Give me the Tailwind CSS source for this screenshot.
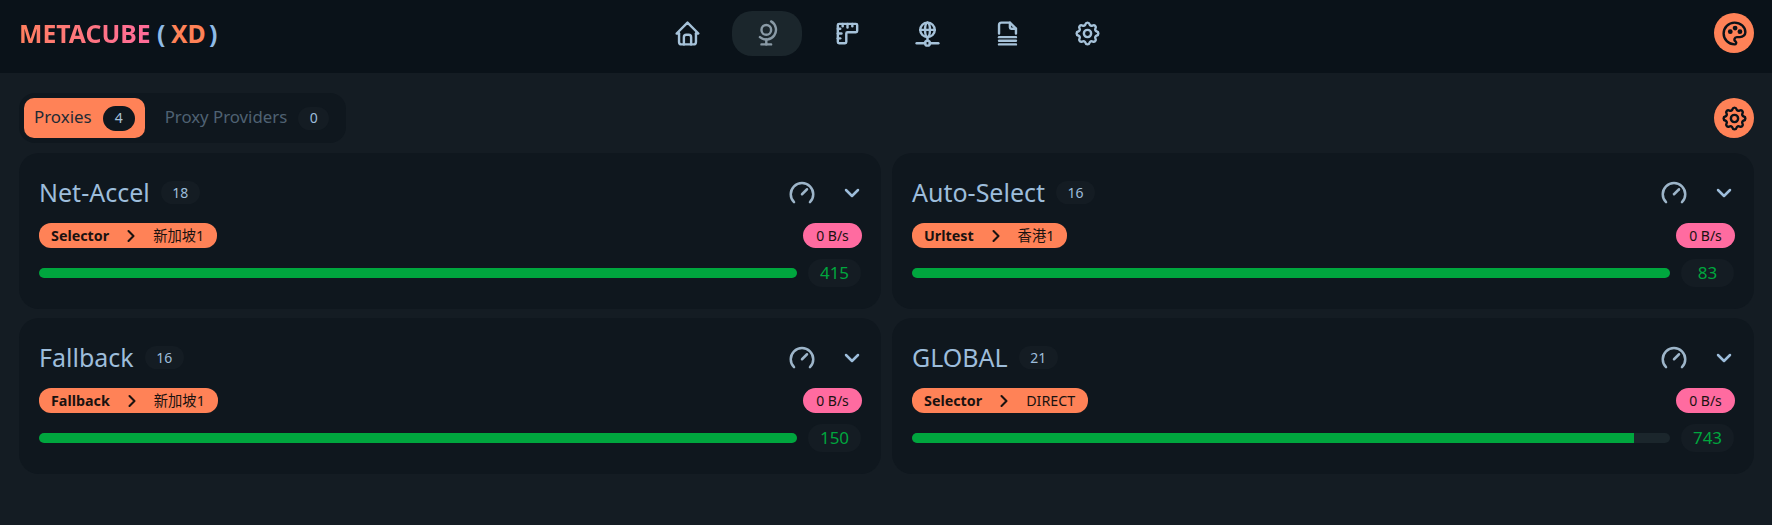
<!DOCTYPE html>
<html lang="en">
<head>
<meta charset="utf-8">
<title>Metacube XD</title>
<script src="https://cdn.jsdelivr.net/npm/@tailwindcss/browser@4"></script>
</head>
<body class="m-0 h-[525px] w-[1772px] overflow-hidden bg-[#141c23] font-['Noto_Sans','Noto_Sans_CJK_SC',sans-serif] text-[#9dbddb]">
<header class="relative flex h-[73px] items-center justify-between bg-[#0a1219] pb-[7px] pl-[19px] pr-[18px]">
  <div class="text-[24.8px] font-bold leading-none"><span class="bg-gradient-to-r from-[#ff7f5e] to-[#ff6b9a] bg-clip-text text-transparent">METACUBE</span> <span class="text-[#8fbbe6]">(</span> <span class="ml-[-1px] text-[#ff8257]">XD</span> <span class="ml-[-3px] text-[#8fbbe6]">)</span></div>
  <nav class="absolute left-[652px] top-[11px] flex gap-[10px] text-[#a6c2d9]">
    <a class="flex h-[45px] w-[70px] items-center justify-center rounded-[20px]"><svg class="h-[29px] w-[29px]" viewBox="0 0 24 24" fill="none" stroke="currentColor" stroke-width="2" stroke-linecap="round" stroke-linejoin="round"><path d="M5 12l-2 0l9 -9l9 9l-2 0"/><path d="M5 12v7a2 2 0 0 0 2 2h10a2 2 0 0 0 2 -2v-7"/><path d="M9 21v-6a2 2 0 0 1 2 -2h2a2 2 0 0 1 2 2v6"/></svg></a>
    <a class="flex h-[45px] w-[70px] items-center justify-center rounded-[20px] bg-[#1b262c] text-[#8a9aa6]"><svg class="h-[29px] w-[29px]" viewBox="0 0 24 24" fill="none" stroke="currentColor" stroke-width="2" stroke-linecap="round" stroke-linejoin="round"><path d="M7 9a4 4 0 1 0 8 0a4 4 0 0 0 -8 0"/><path d="M5.75 15a8.015 8.015 0 1 0 9.25 -13"/><path d="M11 17v4"/><path d="M7 21h8"/></svg></a>
    <a class="flex h-[45px] w-[70px] items-center justify-center rounded-[20px]"><svg class="h-[29px] w-[29px]" viewBox="0 0 24 24" fill="none" stroke="currentColor" stroke-width="2" stroke-linecap="round" stroke-linejoin="round"><path d="M5 4h14a1 1 0 0 1 1 1v5a1 1 0 0 1 -1 1h-7a1 1 0 0 0 -1 1v7a1 1 0 0 1 -1 1h-5a1 1 0 0 1 -1 -1v-14a1 1 0 0 1 1 -1"/><path d="M4 8l2 0"/><path d="M4 12l3 0"/><path d="M4 16l2 0"/><path d="M8 4l0 2"/><path d="M12 4l0 3"/><path d="M16 4l0 2"/></svg></a>
    <a class="flex h-[45px] w-[70px] items-center justify-center rounded-[20px]"><svg class="h-[29px] w-[29px]" viewBox="0 0 24 24" fill="none" stroke="currentColor" stroke-width="2" stroke-linecap="round" stroke-linejoin="round"><path d="M6 9a6 6 0 1 0 12 0a6 6 0 0 0 -12 0"/><path d="M12 3c1.333 .333 2 2.333 2 6s-.667 5.667 -2 6"/><path d="M12 3c-1.333 .333 -2 2.333 -2 6s.667 5.667 2 6"/><path d="M6 9h12"/><path d="M3 20h7"/><path d="M14 20h7"/><path d="M10 20a2 2 0 1 0 4 0a2 2 0 0 0 -4 0"/><path d="M12 15v3"/></svg></a>
    <a class="flex h-[45px] w-[70px] items-center justify-center rounded-[20px]"><svg class="h-[29px] w-[29px]" viewBox="0 0 24 24" fill="none" stroke="currentColor" stroke-width="2" stroke-linecap="round" stroke-linejoin="round"><path d="M14 3v4a1 1 0 0 0 1 1h4"/><path d="M5 12v-7a2 2 0 0 1 2 -2h7l5 5v4"/><path d="M5 21h14"/><path d="M5 18h14"/><path d="M5 15h14"/></svg></a>
    <a class="flex h-[45px] w-[70px] items-center justify-center rounded-[20px]"><svg class="h-[29px] w-[29px]" viewBox="0 0 24 24" fill="none" stroke="currentColor" stroke-width="2" stroke-linecap="round" stroke-linejoin="round"><path d="M10.325 4.317c.426 -1.756 2.924 -1.756 3.35 0a1.724 1.724 0 0 0 2.573 1.066c1.543 -.94 3.31 .826 2.37 2.37a1.724 1.724 0 0 0 1.065 2.572c1.756 .426 1.756 2.924 0 3.35a1.724 1.724 0 0 0 -1.066 2.573c.94 1.543 -.826 3.31 -2.37 2.37a1.724 1.724 0 0 0 -2.572 1.065c-.426 1.756 -2.924 1.756 -3.35 0a1.724 1.724 0 0 0 -2.573 -1.066c-1.543 .94 -3.31 -.826 -2.37 -2.37a1.724 1.724 0 0 0 -1.065 -2.572c-1.756 -.426 -1.756 -2.924 0 -3.35a1.724 1.724 0 0 0 1.066 -2.573c-.94 -1.543 .826 -3.31 2.37 -2.37c1 .608 2.296 .07 2.572 -1.065"/><path d="M9 12a3 3 0 1 0 6 0a3 3 0 0 0 -6 0"/></svg></a>
  </nav>
  <button class="flex h-10 w-10 items-center justify-center rounded-full bg-[#ff8257] text-[#0a1219]"><svg class="h-[29px] w-[29px]" viewBox="0 0 24 24" fill="none" stroke="currentColor" stroke-width="2" stroke-linecap="round" stroke-linejoin="round"><path d="M12 21a9 9 0 0 1 0 -18c4.97 0 9 3.582 9 8c0 1.06 -.474 2.078 -1.318 2.828c-.844 .75 -1.989 1.172 -3.182 1.172h-2.5a2 2 0 0 0 -1 3.75a1.3 1.3 0 0 1 -1 2.25"/><path d="M8.5 10.5m-1 0a1 1 0 1 0 2 0a1 1 0 1 0 -2 0"/><path d="M12.5 7.5m-1 0a1 1 0 1 0 2 0a1 1 0 1 0 -2 0"/><path d="M16.5 10.5m-1 0a1 1 0 1 0 2 0a1 1 0 1 0 -2 0"/></svg></button>
</header>
<main class="pl-[19px] pr-[18px]">
  <div class="flex h-[80px] items-center justify-between pt-[10px]">
    <div class="flex h-[50px] items-center rounded-[16px] bg-[#0f171e] p-[5px]">
      <div class="flex h-10 items-center gap-[11px] rounded-[10px] bg-[#ff8257] px-[10px] text-[#1d2a35]"><span class="mt-[-2px] text-[16.9px]">Proxies</span><span class="flex h-[25px] w-8 items-center justify-center rounded-full bg-[#0f171e] text-sm text-[#a6c2d9]">4</span></div>
      <div class="flex h-10 items-center gap-[11px] pl-[20px] pr-[12px] text-[#4f6273]"><span class="mt-[-2px] text-[16.8px]">Proxy Providers</span><span class="flex h-[23px] w-[31px] items-center justify-center rounded-full bg-[#141c23] text-sm text-[#9dbddb]">0</span></div>
    </div>
    <button class="flex h-10 w-10 items-center justify-center rounded-full bg-[#ff8257] text-[#0a1219]"><svg class="h-[29px] w-[29px]" viewBox="0 0 24 24" fill="none" stroke="currentColor" stroke-width="2" stroke-linecap="round" stroke-linejoin="round"><path d="M10.325 4.317c.426 -1.756 2.924 -1.756 3.35 0a1.724 1.724 0 0 0 2.573 1.066c1.543 -.94 3.31 .826 2.37 2.37a1.724 1.724 0 0 0 1.065 2.572c1.756 .426 1.756 2.924 0 3.35a1.724 1.724 0 0 0 -1.066 2.573c.94 1.543 -.826 3.31 -2.37 2.37a1.724 1.724 0 0 0 -2.572 1.065c-.426 1.756 -2.924 1.756 -3.35 0a1.724 1.724 0 0 0 -2.573 -1.066c-1.543 .94 -3.31 -.826 -2.37 -2.37a1.724 1.724 0 0 0 -1.065 -2.572c-1.756 -.426 -1.756 -2.924 0 -3.35a1.724 1.724 0 0 0 1.066 -2.573c-.94 -1.543 .826 -3.31 2.37 -2.37c1 .608 2.296 .07 2.572 -1.065"/><path d="M9 12a3 3 0 1 0 6 0a3 3 0 0 0 -6 0"/></svg></button>
  </div>
  <div class="grid grid-cols-2 gap-x-[11px] gap-y-[9px]">
    <section class="flex h-[156px] flex-col rounded-[20px] bg-[#0f171e] px-5 pt-[21px]">
      <div class="flex h-[37px] items-center"><h2 class="text-[25px] leading-none">Net-Accel</h2><span class="ml-[11px] flex h-[23px] w-[39px] items-center justify-center rounded-full bg-[#141c23] text-sm">18</span><svg class="ml-auto h-[30px] w-[30px] text-[#9db5c9]" viewBox="0 0 24 24" fill="none" stroke="currentColor" stroke-width="2" stroke-linecap="round" stroke-linejoin="round"><path d="M5.636 19.364a9 9 0 1 1 12.728 0"/><path d="M16 9l-4 4"/></svg><svg class="ml-[23px] mr-[-3px] h-6 w-6" viewBox="0 0 24 24" fill="none" stroke="currentColor" stroke-width="2.5" stroke-linecap="round" stroke-linejoin="round"><path d="M6 9l6 6l6 -6"/></svg></div>
      <div class="mt-[12px] flex items-center justify-between"><div class="flex h-[25px] items-center rounded-[12px] bg-[#ff8257] pl-[12px] pr-[13px] text-[14.3px] text-[#1a1210]"><b>Selector</b><svg class="mx-[12px] h-5 w-5" viewBox="0 0 24 24" fill="none" stroke="currentColor" stroke-width="2.5" stroke-linecap="round" stroke-linejoin="round"><path d="M9 6l6 6l-6 6"/></svg><span>新加坡1</span></div><span class="mr-[-1px] flex h-[25px] w-[59px] items-center justify-center rounded-full bg-[#ff6ba0] text-sm text-[#1a1210]">0 B/s</span></div>
      <div class="mt-[11px] flex h-[28px] items-center gap-[11px]"><div class="h-[10px] flex-1 overflow-hidden rounded-full bg-[#1b262c]"><div class="h-full bg-[#00a63e]" style="width:100%"></div></div><span class="flex h-[28px] w-[53px] items-center justify-center rounded-full bg-[#141c23] text-[17px] text-[#00a63e]">415</span></div>
    </section>
    <section class="flex h-[156px] flex-col rounded-[20px] bg-[#0f171e] px-5 pt-[21px]">
      <div class="flex h-[37px] items-center"><h2 class="text-[25px] leading-none">Auto-Select</h2><span class="ml-[11px] flex h-[23px] w-[39px] items-center justify-center rounded-full bg-[#141c23] text-sm">16</span><svg class="ml-auto h-[30px] w-[30px] text-[#9db5c9]" viewBox="0 0 24 24" fill="none" stroke="currentColor" stroke-width="2" stroke-linecap="round" stroke-linejoin="round"><path d="M5.636 19.364a9 9 0 1 1 12.728 0"/><path d="M16 9l-4 4"/></svg><svg class="ml-[23px] mr-[-2px] h-6 w-6" viewBox="0 0 24 24" fill="none" stroke="currentColor" stroke-width="2.5" stroke-linecap="round" stroke-linejoin="round"><path d="M6 9l6 6l6 -6"/></svg></div>
      <div class="mt-[12px] flex items-center justify-between"><div class="flex h-[25px] items-center rounded-[12px] bg-[#ff8257] pl-[12px] pr-[13px] text-[14.3px] text-[#1a1210]"><b>Urltest</b><svg class="mx-[12px] h-5 w-5" viewBox="0 0 24 24" fill="none" stroke="currentColor" stroke-width="2.5" stroke-linecap="round" stroke-linejoin="round"><path d="M9 6l6 6l-6 6"/></svg><span>香港1</span></div><span class="mr-[-1px] flex h-[25px] w-[59px] items-center justify-center rounded-full bg-[#ff6ba0] text-sm text-[#1a1210]">0 B/s</span></div>
      <div class="mt-[11px] flex h-[28px] items-center gap-[11px]"><div class="h-[10px] flex-1 overflow-hidden rounded-full bg-[#1b262c]"><div class="h-full bg-[#00a63e]" style="width:100%"></div></div><span class="flex h-[28px] w-[53px] items-center justify-center rounded-full bg-[#141c23] text-[17px] text-[#00a63e]">83</span></div>
    </section>
    <section class="flex h-[156px] flex-col rounded-[20px] bg-[#0f171e] px-5 pt-[21px]">
      <div class="flex h-[37px] items-center"><h2 class="text-[25px] leading-none">Fallback</h2><span class="ml-[11px] flex h-[23px] w-[39px] items-center justify-center rounded-full bg-[#141c23] text-sm">16</span><svg class="ml-auto h-[30px] w-[30px] text-[#9db5c9]" viewBox="0 0 24 24" fill="none" stroke="currentColor" stroke-width="2" stroke-linecap="round" stroke-linejoin="round"><path d="M5.636 19.364a9 9 0 1 1 12.728 0"/><path d="M16 9l-4 4"/></svg><svg class="ml-[23px] mr-[-3px] h-6 w-6" viewBox="0 0 24 24" fill="none" stroke="currentColor" stroke-width="2.5" stroke-linecap="round" stroke-linejoin="round"><path d="M6 9l6 6l6 -6"/></svg></div>
      <div class="mt-[12px] flex items-center justify-between"><div class="flex h-[25px] items-center rounded-[12px] bg-[#ff8257] pl-[12px] pr-[13px] text-[14.3px] text-[#1a1210]"><b>Fallback</b><svg class="mx-[12px] h-5 w-5" viewBox="0 0 24 24" fill="none" stroke="currentColor" stroke-width="2.5" stroke-linecap="round" stroke-linejoin="round"><path d="M9 6l6 6l-6 6"/></svg><span>新加坡1</span></div><span class="mr-[-1px] flex h-[25px] w-[59px] items-center justify-center rounded-full bg-[#ff6ba0] text-sm text-[#1a1210]">0 B/s</span></div>
      <div class="mt-[11px] flex h-[28px] items-center gap-[11px]"><div class="h-[10px] flex-1 overflow-hidden rounded-full bg-[#1b262c]"><div class="h-full bg-[#00a63e]" style="width:100%"></div></div><span class="flex h-[28px] w-[53px] items-center justify-center rounded-full bg-[#141c23] text-[17px] text-[#00a63e]">150</span></div>
    </section>
    <section class="flex h-[156px] flex-col rounded-[20px] bg-[#0f171e] px-5 pt-[21px]">
      <div class="flex h-[37px] items-center"><h2 class="text-[25px] leading-none">GLOBAL</h2><span class="ml-[11px] flex h-[23px] w-[39px] items-center justify-center rounded-full bg-[#141c23] text-sm">21</span><svg class="ml-auto h-[30px] w-[30px] text-[#9db5c9]" viewBox="0 0 24 24" fill="none" stroke="currentColor" stroke-width="2" stroke-linecap="round" stroke-linejoin="round"><path d="M5.636 19.364a9 9 0 1 1 12.728 0"/><path d="M16 9l-4 4"/></svg><svg class="ml-[23px] mr-[-2px] h-6 w-6" viewBox="0 0 24 24" fill="none" stroke="currentColor" stroke-width="2.5" stroke-linecap="round" stroke-linejoin="round"><path d="M6 9l6 6l6 -6"/></svg></div>
      <div class="mt-[12px] flex items-center justify-between"><div class="flex h-[25px] items-center rounded-[12px] bg-[#ff8257] pl-[12px] pr-[13px] text-[14.3px] text-[#1a1210]"><b>Selector</b><svg class="mx-[12px] h-5 w-5" viewBox="0 0 24 24" fill="none" stroke="currentColor" stroke-width="2.5" stroke-linecap="round" stroke-linejoin="round"><path d="M9 6l6 6l-6 6"/></svg><span>DIRECT</span></div><span class="mr-[-1px] flex h-[25px] w-[59px] items-center justify-center rounded-full bg-[#ff6ba0] text-sm text-[#1a1210]">0 B/s</span></div>
      <div class="mt-[11px] flex h-[28px] items-center gap-[11px]"><div class="h-[10px] flex-1 overflow-hidden rounded-full bg-[#1b262c]"><div class="h-full bg-[#00a63e]" style="width:95.2%"></div></div><span class="flex h-[28px] w-[53px] items-center justify-center rounded-full bg-[#141c23] text-[17px] text-[#00a63e]">743</span></div>
    </section>
  </div>
</main>
</body>
</html>
